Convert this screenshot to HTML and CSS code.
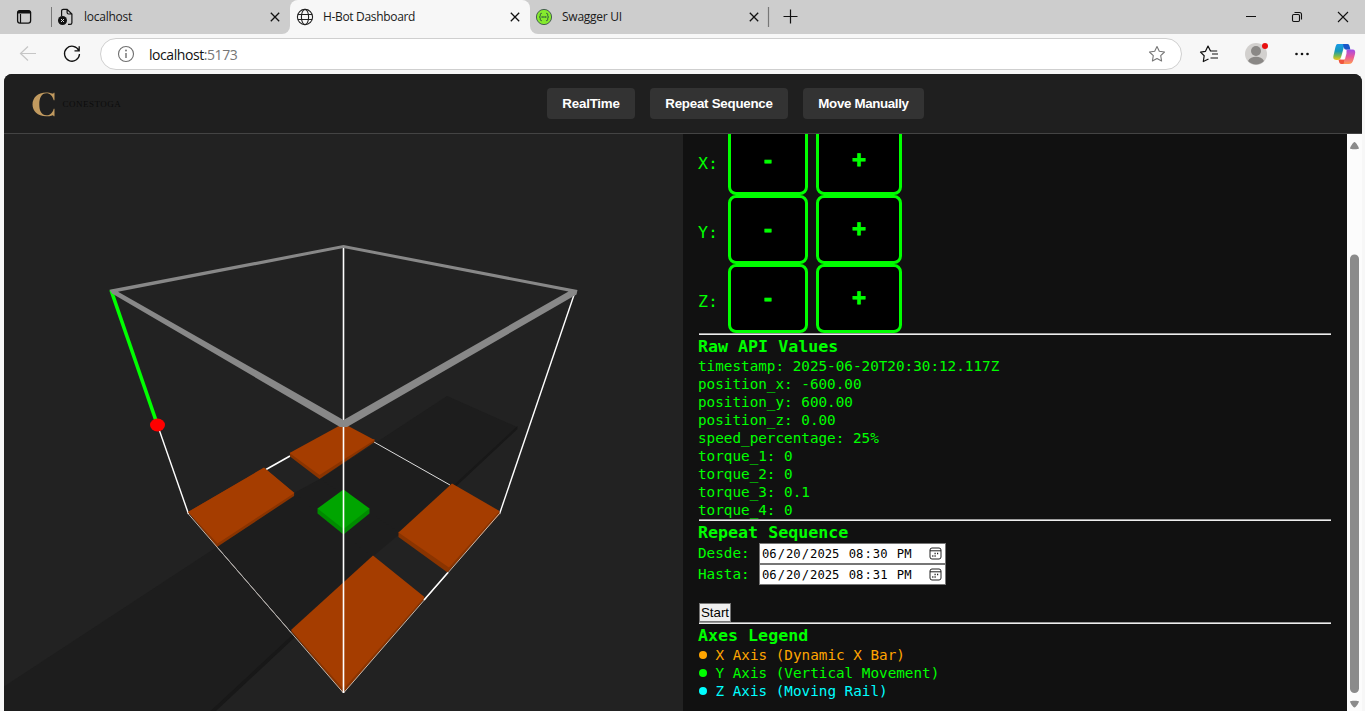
FILE: index.html
```html
<!DOCTYPE html>
<html lang="en">
<head>
<meta charset="utf-8">
<title>H-Bot Dashboard</title>
<link rel="stylesheet" href="styles.css">
</head>
<body>
<div class="tabstrip">
  <svg class="tab-actions" width="52" height="34" viewBox="0 0 52 34" fill="none" stroke="#111">
    <rect x="17.600" y="10.600" width="13" height="12.600" rx="2.400" stroke-width="1.300"/>
    <path d="M17.600 13v-.5a2.400 2.400 0 0 1 2.400-1.900h8.200a2.400 2.400 0 0 1 2.400 1.900v.5z" fill="#111"/>
    <path d="M20.500 14v9" stroke-width="1.200"/>
    <path d="M51.500 7v20" stroke="#777"/>
  </svg>
  <div class="tab tab-first">
    <svg class="favicon" width="18" height="18" viewBox="0 0 18 18" fill="none" stroke="#111" stroke-width="1.200">
      <path d="M4.600 8V3a1.700 1.700 0 0 1 1.700-1.700H10.100L14.900 6v8.700a1.700 1.700 0 0 1-1.700 1.700H11M10.100 1.300V4.500A1.500 1.500 0 0 0 11.600 6h3.300"/>
      <circle cx="5.500" cy="12.500" r="4.500" fill="#111" stroke="none"/>
      <path d="M4 11l3 3m0-3l-3 3" stroke="#ddd" stroke-width="1"/>
    </svg>
    <span class="tab-title t-local">localhost</span>
    <svg class="tab-close" width="10" height="10" viewBox="0 0 10 10"><path d="M.8.800l8.400 8.400m0-8.400L.8 9.200" stroke="#111" stroke-width="1.300"/></svg>
  </div>
  <div class="tab tab-active">
    <svg class="favicon" width="18" height="18" viewBox="0 0 18 18" fill="none" stroke="#222" stroke-width="1.100">
      <circle cx="9" cy="9" r="7.600"/><ellipse cx="9" cy="9" rx="3.600" ry="7.600"/><path d="M2 6.500h14M2 11.500h14"/>
    </svg>
    <span class="tab-title t-hbot">H-Bot Dashboard</span>
    <svg class="tab-close" width="10" height="10" viewBox="0 0 10 10"><path d="M.8.800l8.400 8.400m0-8.400L.8 9.200" stroke="#111" stroke-width="1.300"/></svg>
  </div>
  <div class="tab tab-last">
    <svg class="favicon" width="18" height="18" viewBox="0 0 18 18" fill="none">
      <circle cx="9" cy="9" r="7.600" fill="#85ea2d" stroke="#45604f" stroke-width="1"/>
      <path d="M6.800 5.300c-1.500 0-1.500.6-1.500 1.700S5 9 4.200 9c.8 0 1.100.9 1.100 2s0 1.700 1.500 1.700M11.200 5.300c1.500 0 1.500.6 1.500 1.700s.3 2 1.100 2c-.8 0-1.100.9-1.100 2s0 1.700-1.500 1.700" stroke="#2f5540" stroke-width="1"/>
      <path d="M6.500 9h5" stroke="#2f5540" stroke-width="1.300" stroke-dasharray="1.300 .5"/>
    </svg>
    <span class="tab-title t-swag">Swagger UI</span>
    <svg class="tab-close" width="10" height="10" viewBox="0 0 10 10"><path d="M.8.800l8.400 8.400m0-8.400L.8 9.200" stroke="#111" stroke-width="1.300"/></svg>
  </div>
  <svg class="new-tab" width="34" height="34" viewBox="766 0 34 34" stroke="#111" stroke-width="1.200"><path d="M768.500 7v20" stroke="#777"/><path d="M783.500 16.500h14M790.500 9.500v14"/></svg>
  <svg class="win-controls" height="34" viewBox="1240 0 125 34" preserveAspectRatio="xMaxYMid meet" fill="none" stroke="#111" stroke-width="1.100">
    <path d="M1246 16.500h10M1338 12l10 10m0-10l-10 10"/>
    <rect x="1292.500" y="14.500" width="7" height="7" rx="1.200"/>
    <path d="M1294.500 12.500h5a2 2 0 0 1 2 2v5"/>
  </svg>
</div>
<div class="toolbar">
  <svg class="nav-icons" width="100" height="40" viewBox="0 34 100 40" fill="none" stroke-width="1.200">
    <path d="M36 53.500H20.500M28 46.500l-7.500 7 7.500 7" stroke="#c6c6c6"/>
    <path d="M78.800 50.500a7.500 7.500 0 1 0 .7 3.500M79.200 46.300v4.500h-4.700" stroke="#111" stroke-width="1.300"/>
  </svg>
  <div class="address">
    <svg width="18" height="18" viewBox="0 0 18 18" fill="none" stroke="#6f6f6f" stroke-width="1.100"><circle cx="9" cy="9" r="7.500"/><path d="M9 8v5" stroke-width="1.400"/><circle cx="9" cy="5.500" r=".4"/></svg>
    <span class="url">localhost<i>:5173</i></span>
    <svg class="fav-star" width="18" height="18" viewBox="0 0 18 18" fill="none" stroke="#777" stroke-width="1.100" stroke-linejoin="round"><path d="M9 1.500l2.300 4.800 5.200.7-3.800 3.700.9 5.300L9 13.500 4.400 16l.9-5.300L1.500 7l5.200-.7z"/></svg>
  </div>
  <svg class="tools" width="183" height="40" viewBox="1182 34 183 40" fill="none">
    <defs>
      <linearGradient id="ca" x1="0" y1="0" x2="0" y2="1"><stop offset="0" stop-color="#1a9be8"/><stop offset=".45" stop-color="#1598b8"/><stop offset=".75" stop-color="#7dba4a"/><stop offset="1" stop-color="#f5c51e"/></linearGradient>
      <linearGradient id="cb" x1="0" y1="0" x2="0" y2="1"><stop offset="0" stop-color="#a24be8"/><stop offset=".5" stop-color="#e8589b"/><stop offset="1" stop-color="#ff9c52"/></linearGradient>
    </defs>
    <path d="M1208.500 59.500l-5.200 2.500.9-5.800-3.700-3.600 5-.8 2.500-5.300 2.500 5h6.700M1212 54.500h6M1210.500 58.500h7.500" transform="translate(0 -.5)" stroke="#111" stroke-width="1.200" stroke-linejoin="round"/>
    <circle cx="1256" cy="54" r="11" fill="#d2d0ce"/>
    <circle cx="1256" cy="51" r="5" fill="#8a8886"/>
    <path d="M1248 61c1.500-3 4.500-4.200 8-4.200s6.500 1.200 8 4.200a11 11 0 0 1-16 0z" fill="#8a8886"/>
    <circle cx="1265" cy="46" r="3" fill="#e81010"/>
    <g fill="#111"><circle cx="1296.500" cy="54" r="1.300"/><circle cx="1302" cy="54" r="1.300"/><circle cx="1307.500" cy="54" r="1.300"/></g>
    <path d="M1346 49.500h6.500c2.500 0 3.200 2 2.500 4.500l-1.500 5.500c-1 3-2 4.500-5 4.500h-7c2 0 2.700-2 3.400-4.500l1.600-6c.5-2-1.500-4-.5-4z" fill="url(#cb)"/>
    <path d="M1338.500 59.500h6.500l-1.500 4.500h-2.500c-1.700 0-2-2.500-2.500-4.500z" fill="#f0553d"/>
    <path d="M1337.500 44h10c-3 0-3.500 2.500-4.200 5l-1.800 6.500c-.8 3-1.500 4.500-4 4.500-3.500 0-4.800-1-4-4.500l1.500-6.500c.6-3 1.300-5 2.500-5z" fill="url(#ca)"/>
    <path d="M1343 44h4.500c1.500 0 2.200 1.500 2.800 5.500h-4.500c-2 0-2.300-3.500-2.800-5.500z" fill="#1957c9"/>
    <path d="M1343.800 50h2.900l-2.700 9.200h-2.900z" fill="#fff"/>
  </svg>
</div>
<div class="page">
  <header class="app-header">
    <div class="brand">
      <svg width="24" height="25" viewBox="0 0 24 25"><path fill="#c19a5f" d="M22.500.8v7.400h-.8C20.500 4 18 1.300 14.500 1.300 9.500 1.300 7.300 6 7.300 12.500S9.600 23.300 14.500 23.300c3.700 0 6.200-2.600 7.200-6.600h.8v7.500h-.8c-.3-.8-.7-1-1.500-.8-2 .6-3.800.9-6 .9C5.500 24.300.5 19 .5 12.500S5.500.5 14.200.5c2.300 0 4.100.4 6 1.100.9.300 1.200.1 1.500-.8z"/></svg>
      <span class="brand-name">CONESTOGA</span>
    </div>
    <nav class="menu"><button class="m-real">RealTime</button><button class="m-repeat">Repeat Sequence</button><button class="m-move">Move Manually</button></nav>
  </header>
  <main class="content">
    <svg class="scene" width="679" height="577" viewBox="4 134 679 577">
      <path d="M4 686.500L447 396 517 427 213 711H4z" fill="#1d1d1d"/>
      <path d="M517.500 426v3L216 711h-5.500z" fill="#181818"/>
      <path d="M294 493l25 -15L400 533 372 557z" fill="#1d1d1d"/>
      <path d="M266 469l24-14 30 24-26 14z" fill="#222"/>
      <path d="M398.500 535l49 37-24 26-50-42z" fill="#222"/>
      <g fill="none" stroke="#fff">
        <path d="M266 469.500l24-13.500" stroke-width="1.600"/>
        <path d="M374 442l76 43" stroke="#ddd" stroke-width="1"/>
        <path d="M157.500 425L188.500 514" stroke-width="1.400"/>
        <path d="M575 292L499.500 514" stroke-width="1.400"/>
      </g>
      <g fill="#8a3400">
        <path d="M188 512l76-44 30 25v3l-77 51z"/>
        <path d="M290 453v3.500l29.500 22.500 55-37v-3z"/>
        <path d="M398.500 532v5l49 35.500 52-58v-3z"/>
        <path d="M291 631l52.500 62 81-94-2-3z"/>
      </g>
      <g fill="#a53d00">
        <path d="M188 512l76-44.500 30.500 25.500-77 50.500z"/>
        <path d="M289.500 453l54-29.500 31 16.500-55 35z"/>
        <path d="M398.500 532.500l53.500-49 47.500 27.500-50.500 56.500z"/>
        <path d="M291 630l82-74.500 51.500 41.500-81 92z"/>
      </g>
      <path d="M317.500 508.500v5l26 21 26-21v-5z" fill="#008b00"/>
      <path d="M317.500 508.500l26-19 26 19-26 20.500z" fill="#00a500"/>
      <g fill="none">
        <path d="M188 513.500L343.500 693 499.500 513.500" stroke="#c9b8ac"/>
        <path d="M217 547L291 632.500" stroke="#aaa"/>
        <path d="M424 600l24-27.500" stroke="#fff" stroke-width="1.600"/>
        <path d="M343.500 247v446" stroke="#fff" stroke-width="1.600"/>
      </g>
      <path d="M111 290L157.500 425" stroke="#0f0" stroke-width="3.600"/>
      <path fill="#888" fill-rule="evenodd" d="M109.500 289.800L343.500 245l234 45-1 4.500L347 427h-7L112 293.500zM118 291.800L343.500 420l225-128.500-225-43.500z"/>
      <ellipse cx="157.500" cy="425" rx="7.500" ry="6.500" fill="#f00"/>
    </svg>
    <section class="panel">
      <div class="axis-row"><span>X:</span><button>-</button><button>+</button></div>
      <div class="axis-row"><span>Y:</span><button>-</button><button>+</button></div>
      <div class="axis-row"><span>Z:</span><button>-</button><button>+</button></div>
      <hr>
      <h3>Raw API Values</h3>
      <p>timestamp: 2025-06-20T20:30:12.117Z</p>
      <p>position_x: -600.00</p>
      <p>position_y: 600.00</p>
      <p>position_z: 0.00</p>
      <p>speed_percentage: 25%</p>
      <p>torque_1: 0</p>
      <p>torque_2: 0</p>
      <p>torque_3: 0.1</p>
      <p>torque_4: 0</p>
      <hr>
      <h3>Repeat Sequence</h3>
      <div class="field"><label>Desde:</label><div class="datetime"><b>06</b>/<b>20</b>/<b>2025</b>&nbsp;<b>08</b>:<b>30</b>&nbsp;<b>PM</b>
        <svg width="13" height="13" viewBox="0 0 13 13" fill="none" stroke="#222"><rect x="1" y="1" width="11" height="11" rx="2"/><path d="M1 3.800h11"/><path d="M5.500 6.500h1.200M8 6.500h1.200M3.200 9h1.200M5.500 9h1.200" stroke-width="1.300"/></svg></div></div>
      <div class="field"><label>Hasta:</label><div class="datetime"><b>06</b>/<b>20</b>/<b>2025</b>&nbsp;<b>08</b>:<b>31</b>&nbsp;<b>PM</b>
        <svg width="13" height="13" viewBox="0 0 13 13" fill="none" stroke="#222"><rect x="1" y="1" width="11" height="11" rx="2"/><path d="M1 3.800h11"/><path d="M5.500 6.500h1.200M8 6.500h1.200M3.200 9h1.200M5.500 9h1.200" stroke-width="1.300"/></svg></div></div>
      <button class="start">Start</button>
      <hr>
      <h3>Axes Legend</h3>
      <p class="legend legend-x">X Axis (Dynamic X Bar)</p>
      <p class="legend legend-y">Y Axis (Vertical Movement)</p>
      <p class="legend legend-z">Z Axis (Moving Rail)</p>
    </section>
    <svg class="scrollbar" width="15" height="577" viewBox="1347 134 15 577"><path d="M1350 148.500c0-1 3-6.500 4.500-6.500s4.500 5.500 4.500 6.500c0 1-9 1-9 0zM1350 701.500c0 1 3 6 4.500 6s4.500-5 4.500-6c0-1-9-1-9 0z" fill="#8b8b8b"/><rect x="1350" y="254.500" width="9" height="438.500" rx="4.500" fill="#8b8b8b"/></svg>
  </main>
</div>
</body>
</html>
```

FILE: styles.css
```css
* { box-sizing: border-box; }
body {
  margin: 0;
  height: 711px;
  overflow: hidden;
  display: flex;
  flex-direction: column;
  background: #f7f7f7;
  font-family: "Open Sans", "Noto Sans", sans-serif;
}
svg { display: block; flex: none; }
button { font-family: "Liberation Sans", Arial, sans-serif; }

/* Browser frame */
.tabstrip { display: flex; height: 34px; flex: none; background: #f7f7f7; }
.tab-actions, .new-tab, .win-controls { background: #cdcdcd; }
.tab { display: flex; align-items: center; height: 34px; background: #cdcdcd; }
.tab-first { width: 238px; padding: 0 10px 0 5px; border-bottom-right-radius: 8px; }
.tab-active { width: 240px; padding: 0 10px 0 6px; background: #f7f7f7; border-radius: 8px 8px 0 0; box-shadow: 0 -9px 0 0 #cdcdcd; }
.tab-last { width: 236px; padding: 0 7px 0 5px; border-bottom-left-radius: 8px; }
.tab-title { margin-left: 9px; flex: 1; font-size: 12px; line-height: 16px; color: #1a1a1a; white-space: nowrap; }
.t-local { letter-spacing: -0.25px; }
.t-hbot { letter-spacing: -0.33px; }
.t-swag { letter-spacing: -0.25px; }
.win-controls { flex: 1; }
.toolbar { display: flex; height: 40px; flex: none; }
.address {
  display: flex;
  align-items: center;
  width: 1082px;
  height: 32px;
  margin-top: 4px;
  padding: 0 15px 0 16px;
  background: #fff;
  border: 1px solid #cfcfcf;
  border-radius: 16px;
}
.url { margin-left: 14px; flex: 1; font-size: 14px; letter-spacing: -0.43px; color: #111; }
.url i { font-style: normal; color: #767676; }

/* Dashboard */
.page { width: 1358px; height: 637px; margin-left: 4px; border-radius: 8px 8px 0 0; overflow: hidden; background: #222; }
.app-header { display: flex; align-items: center; height: 60px; padding-left: 27.5px; background: #1f1f1f; border-bottom: 1px solid #444; }
.brand { display: flex; align-items: center; gap: 7px; width: 515.5px; padding-top: 1px; }
.brand-name { font: 9px "Liberation Serif", serif; letter-spacing: 0.5px; color: #0c0c0c; }
.menu { display: flex; gap: 15px; }
.menu button { height: 31px; padding: 0; border: 0; border-radius: 4px; background: #333; color: #fff; font-size: 13.333px; font-weight: bold; white-space: nowrap; }
.menu .m-real { width: 88px; letter-spacing: -0.2px; }
.menu .m-repeat { width: 138px; letter-spacing: -0.25px; }
.menu .m-move { width: 121px; letter-spacing: -0.35px; }
.content { display: flex; height: 577px; }
.scene { background: #222; }
.panel {
  display: flex;
  flex-direction: column;
  width: 664px;
  padding: 0 16px 0 15px;
  overflow: hidden;
  background: #111;
  color: #0f0;
  font: 14.3px/18px "DejaVu Sans Mono", monospace;
}
.panel > * { flex: none; }
.axis-row { display: flex; align-items: center; gap: 8px; height: 69px; font-size: 16.6px; }
.axis-row:first-child { margin-top: -8px; }
.axis-row span { width: 22px; padding-top: 6px; }
.axis-row button { height: 69px; padding: 0 33px 2px; border: 3px solid #0f0; border-radius: 8px; background: #000; color: #0f0; font-size: 24px; font-weight: bold; -webkit-text-stroke: 0.8px #0f0; }
hr { width: 632px; height: 2px; margin: 0 0 0 1px; border: 0; border-top: 1px solid #9a9a9a; background: #eee; }
h3 { height: 22px; margin: 0; padding-top: 1px; font-size: 16.65px; line-height: 22px; font-weight: bold; }
p { margin: 0; height: 18px; white-space: pre; }
.field { display: flex; align-items: center; height: 21px; }
.field label { width: 61px; padding-bottom: 1px; }
.datetime { display: flex; align-items: center; width: 187px; height: 21px; padding: 0 2px 0 1px; border: 1px solid #767676; background: #fff; color: #000; font-size: 12.2px; }
.datetime b { padding: 0 1px; font-weight: normal; }
.datetime svg { margin: 0 1px 0 auto; }
.start { align-self: flex-start; width: 32px; height: 19px; margin: 18px 0 0 1px; padding: 0; border: 1px solid #767676; background: #efefef; color: #000; font-size: 13.333px; }
.legend { display: flex; align-items: center; }
.legend::before { content: ""; width: 8px; height: 8px; margin: 0 8.5px 0 1px; border-radius: 50%; background: currentColor; }
.legend-x { color: orange; }
.legend-y { color: #0f0; }
.legend-z { color: cyan; }
.scrollbar { background: #fcfcfc; }
```
